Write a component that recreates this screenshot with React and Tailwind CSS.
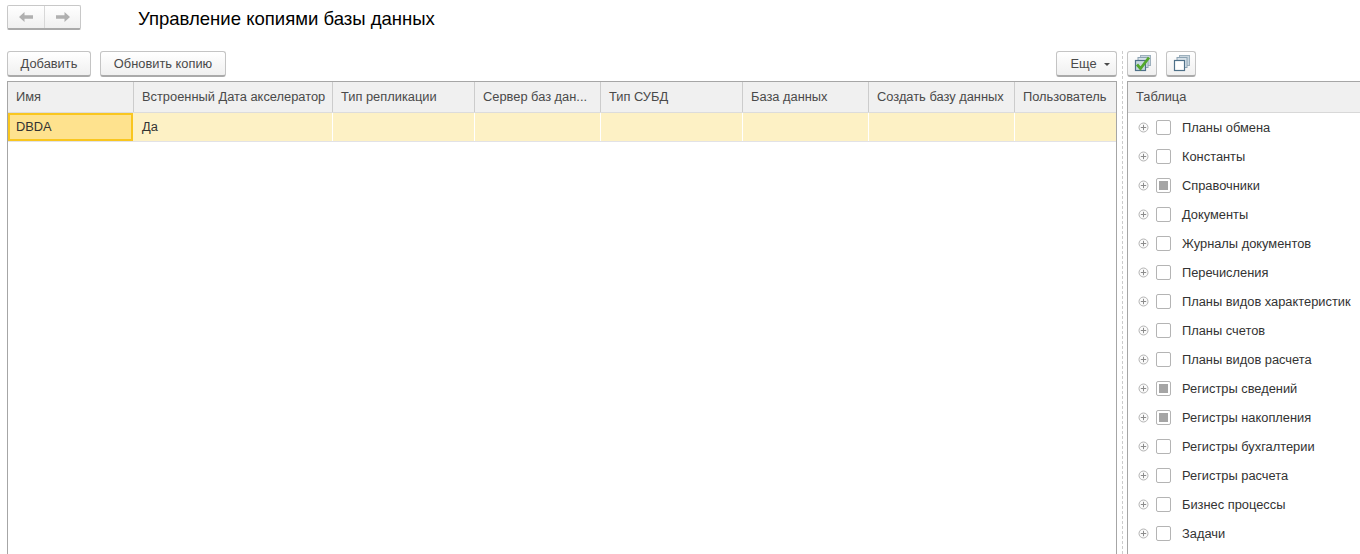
const font = { fontFamily: '"Liberation Sans", Arial, sans-serif' };

const columns = [
  ['Имя', 'w-[126px]'],
  ['Встроенный Дата акселератор', 'w-[199px]'],
  ['Тип репликации', 'w-[142px]'],
  ['Сервер баз дан...', 'w-[126px]'],
  ['Тип СУБД', 'w-[142px]'],
  ['База данных', 'w-[126px]'],
  ['Создать базу данных', 'w-[146px]'],
  ['Пользователь', 'flex-1'],
];

const tree = [
  ['Планы обмена', false],
  ['Константы', false],
  ['Справочники', true],
  ['Документы', false],
  ['Журналы документов', false],
  ['Перечисления', false],
  ['Планы видов характеристик', false],
  ['Планы счетов', false],
  ['Планы видов расчета', false],
  ['Регистры сведений', true],
  ['Регистры накопления', true],
  ['Регистры бухгалтерии', false],
  ['Регистры расчета', false],
  ['Бизнес процессы', false],
  ['Задачи', false],
];

function Button({ children, className = '' }) {
  return (
    <div className={`h-[26px] flex items-center justify-center rounded-[3px] border border-[#c4c4c4] border-b-2 border-b-[#aaaaaa] bg-gradient-to-b from-white to-[#f0f0f0] text-[#4a4a4a] ${className}`}>
      {children}
    </div>
  );
}

function Arrow({ dir }) {
  return (
    <svg width="16" height="12" viewBox="0 0 16 12" className={dir === 'right' ? 'rotate-180' : ''}>
      <path d="M1 6 L6.5 1 V4.2 H15 V7.8 H6.5 V11 Z" fill="#b0b0b0" />
    </svg>
  );
}

function Stack({ checked }) {
  return (
    <svg width="20" height="19" viewBox="0 0 20 19">
      <rect x="8.5" y="1.5" width="10" height="10" fill="#c9d6df" stroke="#9db0bd" />
      <rect x="6" y="3.5" width="10" height="10" fill="#d8e2e9" stroke="#8ea4b4" />
      <rect x="3.5" y="6.5" width="10" height="10" fill={checked ? '#c9d9e2' : '#ffffff'} stroke="#4f7189" strokeWidth="1.2" />
      {checked && <path d="M5 10.5 L8.5 14.5 L17 3.5" fill="none" stroke="#52a82c" strokeWidth="2.8" />}
    </svg>
  );
}

function Expander() {
  return (
    <svg width="11" height="11" viewBox="0 0 11 11" className="shrink-0 mb-[1px]">
      <circle cx="5.5" cy="5.5" r="4.5" fill="#fafafa" stroke="#b4b4b4" />
      <path d="M2.8 5.5 H8.2 M5.5 2.8 V8.2" stroke="#8c8c8c" />
    </svg>
  );
}

export default function App() {
  return (
    <div style={font} className="w-[1360px] h-[554px] overflow-hidden bg-white text-[12.85px] text-[#4a4a4a] flex flex-col">
      <div className="h-[51px] shrink-0 flex items-start pt-[5px] pl-[7px]">
        <div className="flex w-[74px] h-[25px] rounded-[2px] border border-[#c8c8c8] border-b-2 border-b-[#aaaaaa] bg-gradient-to-b from-white to-[#f0f0f0]">
          <div className="w-[37px] flex items-center justify-center border-r border-[#d8d8d8]"><Arrow dir="left" /></div>
          <div className="flex-1 flex items-center justify-center"><Arrow dir="right" /></div>
        </div>
        <div className="ml-[57px] text-[18.55px] leading-[28px] text-black">Управление копиями базы данных</div>
      </div>

      <div className="flex-1 min-h-0 flex">
        <div className="w-[1117px] pl-[7px] shrink-0 flex flex-col">
          <div className="h-[30px] shrink-0 flex gap-[9px]">
            <Button className="w-[84px]">Добавить</Button>
            <Button className="w-[126px]">Обновить копию</Button>
            <Button className="w-[61px] ml-auto gap-[7px] pl-[7px]">
              Еще
              <span className="w-0 h-0 border-x-[3px] border-x-transparent border-t-[3px] border-t-[#4a4a4a] mt-[2px]" />
            </Button>
          </div>
          <div className="flex-1 min-h-0 border border-[#a6a6a6] border-b-0">
            <div className="flex h-[31px] bg-[#f0f0f0] border-b border-[#dcdcdc]">
              {columns.map(([name, w]) => (
                <div key={name} className={`${w} shrink-0 flex items-center pl-[8px] border-r border-[#cccccc] last:border-r-0 whitespace-nowrap overflow-hidden`}>
                  {name}
                </div>
              ))}
            </div>
            <div className="flex h-[29px] bg-[#fdf1c5] border-b border-[#e2e2e6] text-[#333333]">
              <div className="w-[125px] mr-px shrink-0 flex items-center pl-[6px] bg-[#fee28e] border-2 border-[#f9c61f]">DBDA</div>
              {columns.slice(1).map(([name, w], i) => (
                <div key={name} className={`${w} shrink-0 flex items-center pl-[8px] border-r border-white last:border-r-0`}>
                  {i === 0 ? 'Да' : ''}
                </div>
              ))}
            </div>
          </div>
        </div>

        <div className="w-[10px] shrink-0 flex justify-center">
          <div className="w-0 h-full border-l border-dashed border-[#cccccc]" />
        </div>

        <div className="flex-1 min-w-0 flex flex-col">
          <div className="h-[30px] shrink-0 flex gap-[9px]">
            <Button className="w-[30px]"><Stack checked /></Button>
            <Button className="w-[30px]"><Stack /></Button>
          </div>
          <div className="flex-1 min-h-0 border-l border-t border-[#a6a6a6]">
            <div className="h-[31px] flex items-center pl-[8px] bg-[#f0f0f0] border-b border-[#d8d8d8]">Таблица</div>
            <div className="text-[#333333]">
              {tree.map(([name, on]) => (
                <div key={name} className="h-[29px] flex items-center pl-[10px] whitespace-nowrap">
                  <Expander />
                  <div className="ml-[7px] w-[15px] h-[15px] shrink-0 rounded-[2px] border border-[#b4b4b4] flex items-center justify-center bg-white">
                    {on && <div className="w-[9px] h-[9px] bg-[#a5a5a5]" />}
                  </div>
                  <div className="ml-[11px]">{name}</div>
                </div>
              ))}
            </div>
          </div>
        </div>
      </div>
    </div>
  );
}
